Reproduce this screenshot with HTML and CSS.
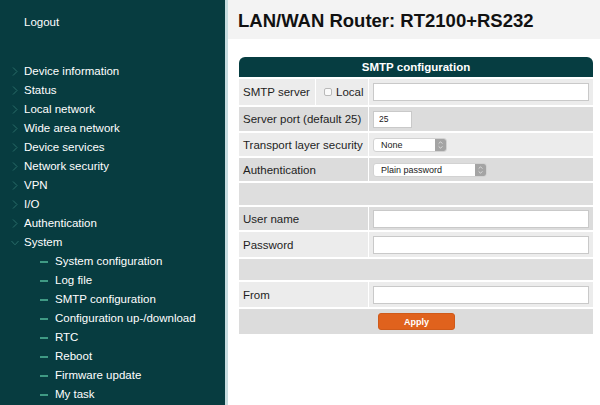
FILE: index.html
```html
<!DOCTYPE html>
<html lang="en">
<head>
<meta charset="utf-8">
<title>LAN/WAN Router: RT2100+RS232</title>
<link rel="stylesheet" href="styles.css">
</head>
<body>
<div class="app">
  <nav class="sidebar">
    <div class="logout">Logout</div>
    <ul class="menu">
      <li class="item"><svg class="chev" viewBox="0 0 6 9"><polyline points="1,0.5 5,4.5 1,8.5"/></svg>Device information</li>
      <li class="item"><svg class="chev" viewBox="0 0 6 9"><polyline points="1,0.5 5,4.5 1,8.5"/></svg>Status</li>
      <li class="item"><svg class="chev" viewBox="0 0 6 9"><polyline points="1,0.5 5,4.5 1,8.5"/></svg>Local network</li>
      <li class="item"><svg class="chev" viewBox="0 0 6 9"><polyline points="1,0.5 5,4.5 1,8.5"/></svg>Wide area network</li>
      <li class="item"><svg class="chev" viewBox="0 0 6 9"><polyline points="1,0.5 5,4.5 1,8.5"/></svg>Device services</li>
      <li class="item"><svg class="chev" viewBox="0 0 6 9"><polyline points="1,0.5 5,4.5 1,8.5"/></svg>Network security</li>
      <li class="item"><svg class="chev" viewBox="0 0 6 9"><polyline points="1,0.5 5,4.5 1,8.5"/></svg>VPN</li>
      <li class="item"><svg class="chev" viewBox="0 0 6 9"><polyline points="1,0.5 5,4.5 1,8.5"/></svg>I/O</li>
      <li class="item"><svg class="chev" viewBox="0 0 6 9"><polyline points="1,0.5 5,4.5 1,8.5"/></svg>Authentication</li>
      <li class="item"><svg class="chev-down" viewBox="0 0 8 6"><polyline points="0.5,1 4,4.8 7.5,1"/></svg>System</li>
      <li class="sub"><span class="dash"></span>System configuration</li>
      <li class="sub"><span class="dash"></span>Log file</li>
      <li class="sub"><span class="dash"></span>SMTP configuration</li>
      <li class="sub"><span class="dash"></span>Configuration up-/download</li>
      <li class="sub"><span class="dash"></span>RTC</li>
      <li class="sub"><span class="dash"></span>Reboot</li>
      <li class="sub"><span class="dash"></span>Firmware update</li>
      <li class="sub"><span class="dash"></span>My task</li>
    </ul>
  </nav>
  <main class="main">
    <header class="titlebar"><h1 class="title">LAN/WAN Router: RT2100+RS232</h1></header>
    <section class="panel">
      <div class="panel-head">SMTP configuration</div>
      <div class="form-grid">
        <div class="cell light">SMTP server</div>
        <div class="cell light local"><span class="checkbox"></span>Local</div>
        <div class="cell light val"><input class="text-in" type="text"></div>

        <div class="cell dark span2">Server port (default 25)</div>
        <div class="cell dark val"><input class="text-in port" type="text" value="25"></div>

        <div class="cell light span2">Transport layer security</div>
        <div class="cell light val">
          <span class="select sel-none"><select class="select-el"><option>None</option></select><span class="stepper"><svg viewBox="0 0 11 13"><polyline points="3.5,5 5.5,3 7.5,5"/><polyline points="3.5,8 5.5,10 7.5,8"/></svg></span></span>
        </div>

        <div class="cell dark span2">Authentication</div>
        <div class="cell dark val">
          <span class="select sel-plain"><select class="select-el"><option>Plain password</option></select><span class="stepper"><svg viewBox="0 0 11 13"><polyline points="3.5,5 5.5,3 7.5,5"/><polyline points="3.5,8 5.5,10 7.5,8"/></svg></span></span>
        </div>

        <div class="cell sep full"></div>

        <div class="cell dark span2">User name</div>
        <div class="cell dark val"><input class="text-in" type="text"></div>

        <div class="cell light span2">Password</div>
        <div class="cell light val"><input class="text-in" type="password"></div>

        <div class="cell sep full"></div>

        <div class="cell light span2">From</div>
        <div class="cell light val"><input class="text-in" type="text"></div>

        <div class="cell dark full center"><button class="apply" type="button">Apply</button></div>
      </div>
    </section>
  </main>
</div>
</body>
</html>
```

FILE: styles.css
```css
* { box-sizing: border-box; }

html, body {
  margin: 0;
  padding: 0;
  width: 600px;
  height: 405px;
  overflow: hidden;
  background: #ffffff;
  font-family: "Liberation Sans", Arial, sans-serif;
  font-size: 11.5px;
  color: #1e1e1e;
}

.app {
  display: flex;
  height: 405px;
}

/* Sidebar */
.sidebar {
  width: 228px;
  flex: 0 0 228px;
  background: #073c40;
  border-right: 3px solid #c6dcdf;
  color: #ffffff;
  overflow: hidden;
}

.logout {
  padding: 13px 0 0 24px;
  line-height: 19px;
}

.menu {
  list-style: none;
  margin: 30px 0 0 0;
  padding: 0;
}

.item, .sub {
  display: flex;
  align-items: center;
  height: 19px;
  line-height: 19px;
  white-space: nowrap;
}

.item {
  padding-left: 12px;
}

.chev {
  width: 6px;
  height: 9px;
  margin-right: 6px;
  fill: none;
  stroke: #2a6c69;
  stroke-width: 1;
}

.chev-down {
  width: 8px;
  height: 6px;
  margin-left: -1px;
  margin-right: 5px;
  fill: none;
  stroke: #2a6c69;
  stroke-width: 1;
}

.sub {
  padding-left: 40px;
}

.dash {
  display: inline-block;
  width: 8px;
  height: 2px;
  background: #3f9a84;
  margin-right: 7px;
}

/* Main */
.main {
  flex: 1;
  min-width: 0;
}

.titlebar {
  height: 39px;
  background: #f3f3f3;
  padding-left: 10px;
}

.title {
  margin: 0;
  font-size: 18.5px;
  font-weight: bold;
  line-height: 39px;
  color: #111111;
  padding-top: 1px;
}

.panel {
  margin: 18px 7px 0 11px;
}

.panel-head {
  height: 20px;
  line-height: 20px;
  background: #063d41;
  color: #ffffff;
  font-weight: bold;
  text-align: center;
  border-radius: 6px 6px 0 0;
  margin-bottom: 2px;
}

.form-grid {
  display: grid;
  grid-template-columns: 76px 52px 1fr;
  grid-template-rows: 26px 24px 23px 23px 22px 23px 25px 21px 25px 25px;
  row-gap: 2px;
  column-gap: 1px;
  background: #ffffff;
}

.cell {
  display: flex;
  align-items: center;
  padding: 0 4px;
  white-space: nowrap;
}

.light { background: #ececec; }
.dark { background: #dcdcdc; }
.sep { background: #dedede; }

.span2 { grid-column: 1 / 3; }
.full { grid-column: 1 / 4; }
.center { justify-content: center; }

.local {
  padding-left: 8px;
}

.checkbox {
  display: inline-block;
  width: 8px;
  height: 8px;
  border: 1px solid #b9b9b9;
  border-radius: 2px;
  background: #fafafa;
  margin-right: 4px;
}

.val {
  padding: 0 4px;
}

.text-in {
  width: 100%;
  height: 18px;
  border: 1px solid #c9c9c9;
  background: #ffffff;
  margin: 0;
  padding: 0 5px;
  font-family: "Liberation Sans", Arial, sans-serif;
  font-size: 8.5px;
  color: #222222;
  outline: none;
}

.text-in.port {
  width: 39px;
  height: 17px;
}

.select {
  display: inline-flex;
  height: 14px;
  border: 1px solid #d2d2d2;
  border-radius: 3px;
  background: #ffffff;
  overflow: hidden;
}

.sel-none { width: 74px; }
.sel-plain { width: 114px; }

.select-el {
  appearance: none;
  -webkit-appearance: none;
  flex: 1;
  min-width: 0;
  border: none;
  background: transparent;
  margin: 0;
  padding: 0 0 0 7px;
  font-family: "Liberation Sans", Arial, sans-serif;
  font-size: 9px;
  color: #222222;
  height: 12px;
  line-height: 12px;
  outline: none;
}

.stepper {
  width: 11px;
  flex: 0 0 11px;
  background: #a4a4a4;
  display: flex;
  align-items: center;
  justify-content: center;
}

.stepper svg {
  width: 11px;
  height: 12px;
  fill: none;
  stroke: #e8e8e8;
  stroke-width: 0.9;
}

.apply {
  width: 77px;
  height: 17px;
  background: #e0621d;
  border: 1px solid #cf5a1a;
  border-radius: 3px;
  color: #ffffff;
  font-family: "Liberation Sans", Arial, sans-serif;
  font-weight: bold;
  font-size: 9px;
  padding: 0;
  margin-left: 1px;
}
```
